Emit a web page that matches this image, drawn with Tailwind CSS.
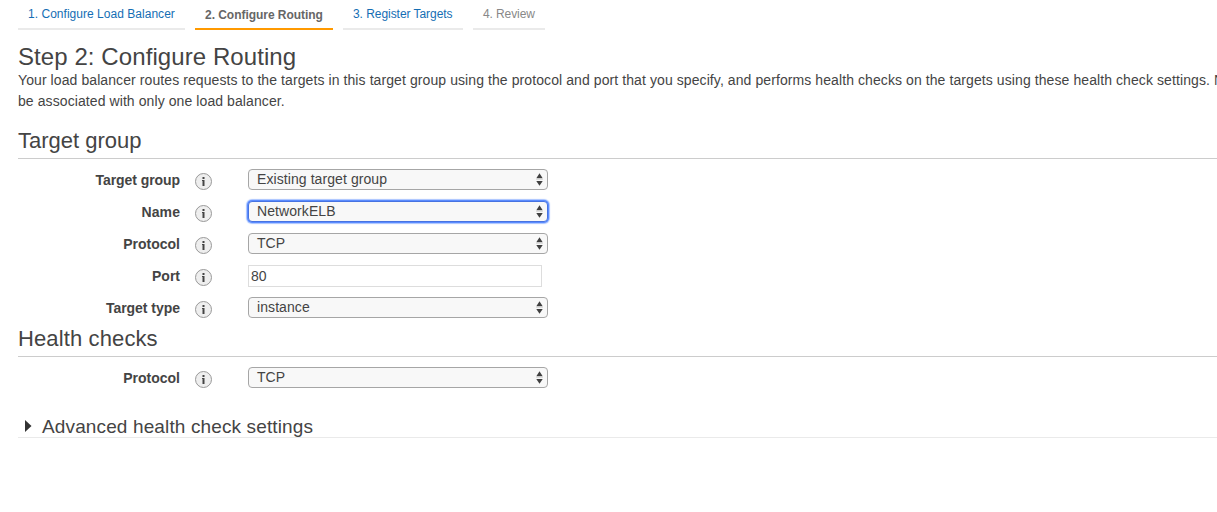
<!DOCTYPE html>
<html lang="en">
<head>
<meta charset="utf-8">
<title>Configure Routing</title>
<script src="https://cdn.jsdelivr.net/npm/@tailwindcss/browser@4"></script>
</head>
<body class="h-[512px] overflow-hidden bg-white pl-[18px] font-['Liberation_Sans',Arial,sans-serif] text-sm text-[#444] whitespace-nowrap">
<svg class="hidden">
  <symbol id="info" viewBox="0 0 18 18"><circle cx="9.5" cy="9.5" r="8" fill="#eee" stroke="#999"/><path d="M8.5 5h2v2h-2zM8 8h2.5v6h-2V9H8z" fill="#444"/></symbol>
  <symbol id="updown" viewBox="0 0 8 13"><path d="M4.5 .3 7.7 5.3H1.3zM4.5 12.7 1.3 8h6.4z" fill="#404040"/><path d="M1 6.5h7" stroke="#ddd"/></symbol>
</svg>
<nav class="flex h-[30px] gap-2.5 text-xs leading-[28px]">
  <a class="w-[167px] border-b-2 border-[#eaeaea] pl-2.5 tracking-[0.03px] text-[#146eb4]"><span>1. Configure Load Balancer</span></a>
  <a class="w-[138px] border-b-2 border-[#f90] pt-px pl-2.5 font-bold tracking-[-0.04px] text-[#666]"><span>2. Configure Routing</span></a>
  <a class="w-[120px] border-b-2 border-[#eaeaea] pl-2.5 tracking-[-0.05px] text-[#146eb4]"><span>3. Register Targets</span></a>
  <a class="w-[72px] border-b-2 border-[#eaeaea] pl-2.5 tracking-[-0.1px] text-[#888]"><span>4. Review</span></a>
</nav>
<h1 class="mt-[13px] h-[27px] text-2xl leading-[27px] tracking-[0.08px]"><span>Step 2: Configure Routing</span></h1>
<p class="leading-[21px] tracking-[0.087px]"><span>Your load balancer routes requests to the targets in this target group using the protocol and port that you specify, and performs health checks on the targets using these health check settings. N</span><br><span>be associated with only one load balancer.</span></p>
<h2 class="mt-4 h-[31px] border-b border-[#ccc] text-[22px] leading-[26px]"><span>Target group</span></h2>
<section class="pt-[5px] tracking-[0.08px]">
  <div class="flex h-8"><b class="w-[162px] text-right leading-8 tracking-[-0.07px]"><span>Target group</span></b><svg class="mt-2 ml-[14px] size-[18px]"><use href="#info"/></svg>
    <div class="mt-[5px] ml-9 flex h-[21px] w-[300px] items-center justify-between rounded border border-[#a6a6a6] bg-[#f8f8f8] pr-1 pl-2 leading-[19px]"><span>Existing target group</span><svg class="h-[13px] w-2"><use href="#updown"/></svg></div></div>
  <div class="flex h-8"><b class="w-[162px] text-right leading-8"><span>Name</span></b><svg class="mt-2 ml-[14px] size-[18px]"><use href="#info"/></svg>
    <div class="mt-[5px] ml-9 flex h-[21px] w-[300px] items-center justify-between rounded-sm border border-[#4773e1] bg-[#f8f8f8] pr-1 pl-2 leading-[19px] shadow-[0_0_0_1px_#5b8cff,0_0_1px_2px_#a9c4ff]"><span>NetworkELB</span><svg class="h-[13px] w-2"><use href="#updown"/></svg></div></div>
  <div class="flex h-8"><b class="w-[162px] text-right leading-8 tracking-normal"><span>Protocol</span></b><svg class="mt-2 ml-[14px] size-[18px]"><use href="#info"/></svg>
    <div class="mt-[5px] ml-9 flex h-[21px] w-[300px] items-center justify-between rounded border border-[#a6a6a6] bg-[#f8f8f8] pr-1 pl-2 leading-[19px] tracking-normal"><span>TCP</span><svg class="h-[13px] w-2"><use href="#updown"/></svg></div></div>
  <div class="flex h-8"><b class="w-[162px] text-right leading-8 tracking-normal"><span>Port</span></b><svg class="mt-2 ml-[14px] size-[18px]"><use href="#info"/></svg>
    <div class="mt-[5px] ml-9 h-[22px] w-[294px] border border-[#ddd] pl-0.5 leading-[21px] tracking-normal"><span>80</span></div></div>
  <div class="flex h-8"><b class="w-[162px] text-right leading-8 tracking-[-0.03px]"><span>Target type</span></b><svg class="mt-2 ml-[14px] size-[18px]"><use href="#info"/></svg>
    <div class="mt-[5px] ml-9 flex h-[21px] w-[300px] items-center justify-between rounded border border-[#a6a6a6] bg-[#f8f8f8] pr-1 pl-2 leading-[19px]"><span>instance</span><svg class="h-[13px] w-2"><use href="#updown"/></svg></div></div>
</section>
<h2 class="mt-0.5 h-[31px] border-b border-[#ccc] text-[22px] leading-[26px] tracking-[0.12px]"><span>Health checks</span></h2>
<section class="pt-[5px]">
  <div class="flex h-8"><b class="w-[162px] text-right leading-8"><span>Protocol</span></b><svg class="mt-2 ml-[14px] size-[18px]"><use href="#info"/></svg>
    <div class="mt-[5px] ml-9 flex h-[21px] w-[300px] items-center justify-between rounded border border-[#a6a6a6] bg-[#f8f8f8] pr-1 pl-2 leading-[19px]"><span>TCP</span><svg class="h-[13px] w-2"><use href="#updown"/></svg></div></div>
</section>
<h3 class="mt-[21px] flex h-[23px] border-b border-[#eaeaea] text-[19px] leading-[23px] tracking-[0.13px]"><svg class="mt-[5px] ml-[7px] h-3 w-[17px]" viewBox="0 0 17 12"><path d="M0 0 6.5 6 0 12z" fill="#333"/></svg><span>Advanced health check settings</span></h3>
</body>
</html>
